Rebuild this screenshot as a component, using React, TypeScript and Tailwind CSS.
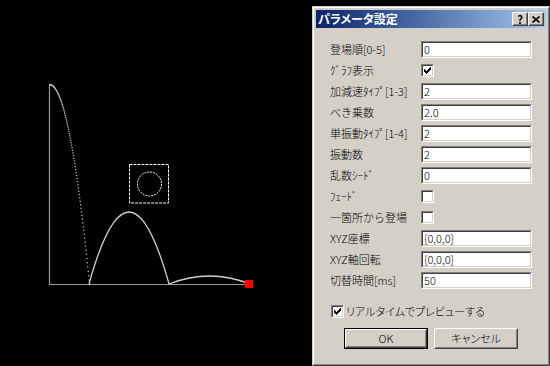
import React from "react";

type Row = { label: string; value?: string; check?: boolean };

const rows: Row[] = [
  { label: "登場順[0-5]", value: "0" },
  { label: "ｸﾞﾗﾌ表示", check: true },
  { label: "加減速ﾀｲﾌﾟ[1-3]", value: "2" },
  { label: "べき乗数", value: "2.0" },
  { label: "単振動ﾀｲﾌﾟ[1-4]", value: "2" },
  { label: "振動数", value: "2" },
  { label: "乱数ｼｰﾄﾞ", value: "0" },
  { label: "ﾌｪｰﾄﾞ", check: false },
  { label: "一箇所から登場", check: false },
  { label: "XYZ座標", value: "{0,0,0}" },
  { label: "XYZ軸回転", value: "{0,0,0}" },
  { label: "切替時間[ms]", value: "50" },
];

// falling part of the curve, sampled evenly in time so the dots spread out
const fallDots = Array.from({ length: 90 }, (_, i) => {
  const t = i / 89;
  return { x: 49 + 40 * t, y: 84 + 200 * t * t };
});

const Chart = () => (
  <svg width="312" height="366" viewBox="0 0 312 366" className="block">
    <path d="M49.5 84 V284.5 H250" stroke="#9a9a9a" strokeWidth="1.2" fill="none" />
    {fallDots.map((p, i) => (
      <rect key={i} x={p.x} y={p.y} width="1.2" height="1.2" fill="#cfcfcf" />
    ))}
    <path d="M89 284 Q129 140 169 284" stroke="#d0d0d0" strokeWidth="1.3" fill="none" />
    <path d="M169 284 Q209.5 268 250 284" stroke="#d0d0d0" strokeWidth="1.3" fill="none" />
    <rect x="245" y="280" width="8" height="8" fill="#ff0000" />
    <rect x="129.5" y="164.5" width="39" height="38.5" stroke="#ffffff" strokeWidth="1" strokeDasharray="3 1" fill="none" />
    <circle cx="149.5" cy="184" r="12" stroke="#ffffff" strokeWidth="1" strokeDasharray="2 1" fill="none" />
  </svg>
);

const Sunken = ({ className, children }: { className: string; children?: React.ReactNode }) => (
  <div className={`${className} border border-t-[#808080] border-l-[#808080] border-r-white border-b-white`}>
    <div className="h-full w-full border border-t-[#404040] border-l-[#404040] border-r-[#d4d0c8] border-b-[#d4d0c8] bg-white">
      {children}
    </div>
  </div>
);

const CheckMark = () => (
  <svg width="7" height="7" viewBox="0 0 7 7" className="ml-[1px] mt-[1px] block">
    <rect x="0" y="2" width="1" height="3" fill="#000" />
    <rect x="1" y="3" width="1" height="3" fill="#000" />
    <rect x="2" y="4" width="1" height="3" fill="#000" />
    <rect x="3" y="3" width="1" height="3" fill="#000" />
    <rect x="4" y="2" width="1" height="3" fill="#000" />
    <rect x="5" y="1" width="1" height="3" fill="#000" />
    <rect x="6" y="0" width="1" height="3" fill="#000" />
  </svg>
);

const CheckBox = ({ checked }: { checked?: boolean }) => (
  <Sunken className="h-[13px] w-[13px]">{checked && <CheckMark />}</Sunken>
);

const Raised = ({ className, children }: { className: string; children?: React.ReactNode }) => (
  <div className={`${className} border border-t-white border-l-white border-r-[#404040] border-b-[#404040] bg-[#d4d0c8]`}>
    <div className="flex h-full w-full items-center justify-center border border-t-[#d4d0c8] border-l-[#d4d0c8] border-r-[#808080] border-b-[#808080]">
      {children}
    </div>
  </div>
);

const Dialog = () => (
  <div className="mt-[6px] h-[360px] w-[238px] border border-t-[#d4d0c8] border-l-[#d4d0c8] border-r-[#404040] border-b-[#404040] bg-[#d4d0c8]">
    <div className="h-full w-full border border-t-white border-l-white border-r-[#808080] border-b-[#808080] p-[2px]">
      <div className="flex h-[18px] items-center bg-linear-to-r from-[#0a246a] to-[#a6caf0] pl-[2px] pr-[2px]">
        <div className="flex-1 text-[12px] font-bold leading-none text-white [font-feature-settings:'palt']">パラメータ設定</div>
        <Raised className="h-[14px] w-[16px]">
          <span className="text-[11px] font-bold leading-none text-black">?</span>
        </Raised>
        <Raised className="h-[14px] w-[16px]">
          <svg width="8" height="7" viewBox="0 0 8 7" className="block">
            <path d="M0.5 0.5 L7.5 6.5 M7.5 0.5 L0.5 6.5" stroke="#000" strokeWidth="1.6" />
          </svg>
        </Raised>
      </div>
      <div className="flex flex-col pl-[14px] pt-[11px] font-light">
        {rows.map((r) => (
          <div key={r.label} className="flex h-[21px] items-center">
            <div className="w-[91px] whitespace-nowrap text-[11px] leading-none text-black">{r.label}</div>
            {r.value !== undefined ? (
              <Sunken className="h-[17px] w-[111px]">
                <div className="pl-[1px] text-[11px] leading-[13px] text-black">{r.value}</div>
              </Sunken>
            ) : (
              <CheckBox checked={r.check} />
            )}
          </div>
        ))}
        <div className="ml-[1px] mt-[14px] flex h-[13px] items-center gap-[2px]">
          <CheckBox checked />
          <span className="text-[11px] leading-none text-black [font-feature-settings:'palt']">リアルタイムでプレビューする</span>
        </div>
        <div className="ml-[14px] mt-[10px] flex gap-[6px]">
          <div className="h-[21px] w-[84px] border border-black">
            <Raised className="h-full w-full">
              <span className="text-[11px] leading-none text-black">OK</span>
            </Raised>
          </div>
          <Raised className="h-[21px] w-[84px]">
            <span className="text-[11px] leading-none text-black [font-feature-settings:'palt']">キャンセル</span>
          </Raised>
        </div>
      </div>
    </div>
  </div>
);

export default function App() {
  return (
    <div
      className="flex h-[366px] w-[550px] overflow-hidden bg-black"
      style={{ fontFamily: '"Noto Sans CJK JP", "Liberation Sans", sans-serif' }}
    >
      <div className="w-[312px] shrink-0">
        <Chart />
      </div>
      <Dialog />
    </div>
  );
}
